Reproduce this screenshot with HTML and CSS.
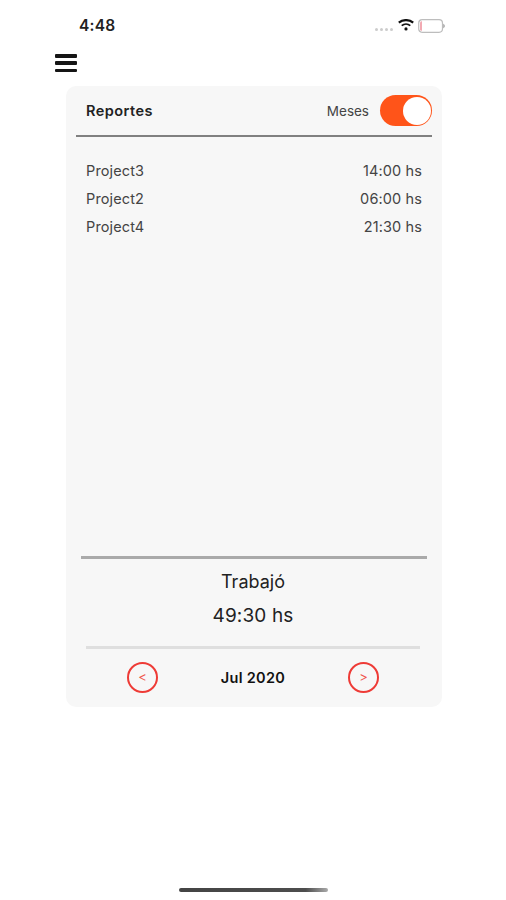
FILE: index.html
```html
<!DOCTYPE html>
<html lang="es">
<head>
<meta charset="utf-8">
<title>Reportes</title>
<link rel="stylesheet" href="styles.css">
</head>
<body>
<header class="status">
  <span class="time">4:48</span>
  <div class="indicators">
    <span class="signal"><i></i><i></i><i></i><i></i></span>
    <svg class="wifi" width="16" height="12" viewBox="0 0 16 12" fill="none" stroke="#111">
      <path d="M.8 3.700C5 .2 11 .2 15.200 3.700" stroke-width="2.200"/>
      <path d="M3.700 6.700c2.500-2.100 6.100-2.100 8.600 0" stroke-width="1.700"/>
      <circle cx="8" cy="9.900" r="1.600" fill="#111" stroke="none"/>
    </svg>
    <svg class="battery" width="27" height="14" viewBox="0 0 27 14">
      <rect x=".7" y=".7" width="23.800" height="12.600" rx="3.500" fill="#fff" stroke="#bdbdbd" stroke-width="1.200"/>
      <path d="M4 2.200v9.600H3.500A1.500 1.500 0 0 1 2 10.300V3.700A1.500 1.500 0 0 1 3.500 2.200z" fill="#f2a9b2"/>
      <path d="M25.300 4.800c1.900.8 1.900 3.600 0 4.400z" fill="#999"/>
    </svg>
  </div>
</header>
<button class="menu" aria-label="Menú"><i></i><i></i><i></i></button>
<main class="card">
  <div class="head">
    <h1>Reportes</h1>
    <span class="mode">Meses</span>
    <span class="toggle"><i></i></span>
  </div>
  <ul class="list">
    <li><span>Project3</span><span class="hours">14:00 hs</span></li>
    <li><span>Project2</span><span class="hours">06:00 hs</span></li>
    <li><span>Project4</span><span class="hours">21:30 hs</span></li>
  </ul>
  <section class="total">
    <div class="label">Trabajó</div>
    <div class="sum">49:30 hs</div>
  </section>
  <nav class="pager">
    <button class="step">&lt;</button>
    <strong>Jul 2020</strong>
    <button class="step">&gt;</button>
  </nav>
</main>
<div class="home"></div>
</body>
</html>
```
FILE: styles.css
```css
* { box-sizing: border-box; }
body {
  margin: 0;
  height: 900px;
  display: flex;
  flex-direction: column;
  background: #fff;
  color: #222;
  font-family: Inter, "Liberation Sans", sans-serif;
  overflow: hidden;
}
button { padding: 0; background: none; border: 0; font-family: inherit; }
.status {
  height: 54px;
  padding: 0 61px 3px 79px;
  display: flex;
  align-items: center;
  justify-content: space-between;
}
.time { font-size: 15.5px; font-weight: 600; letter-spacing: .2px; color: #222; }
.indicators { display: flex; align-items: center; }
.signal { display: flex; gap: 2px; margin: 8px 5px 0 0; }
.signal i { width: 3px; height: 3px; border-radius: 50%; background: #ccc; }
.wifi { margin: -1px 4px 0 0; }
.menu {
  width: 22px;
  height: 18px;
  margin-left: 55px;
  display: flex;
  flex-direction: column;
  justify-content: space-between;
}
.menu i { width: 22px; height: 3.5px; border-radius: 1px; background: #151515; }
.card {
  width: 376px;
  height: 621px;
  margin: 14px 0 0 66px;
  display: flex;
  flex-direction: column;
  background: #f7f7f7;
  border-radius: 10px;
}
.head {
  height: 51px;
  margin: 0 10px;
  padding: 0 0 0 10px;
  display: flex;
  align-items: center;
  border-bottom: 2.5px solid #808080;
}
h1 { margin: 0 auto 0 0; font-size: 14.5px; font-weight: 600; letter-spacing: .45px; }
.mode { font-size: 13.5px; color: #444; }
.toggle {
  width: 52px;
  height: 31px;
  margin-left: 11px;
  padding: 1.5px;
  display: flex;
  justify-content: flex-end;
  border-radius: 16px;
  background: #ff5419;
}
.toggle i { width: 28px; height: 28px; border-radius: 50%; background: #fff; }
.list { flex: 1; margin: 0; padding: 19px 20px 0; list-style: none; }
.list li {
  height: 28px;
  display: flex;
  align-items: center;
  justify-content: space-between;
  font-size: 14.5px;
  letter-spacing: .12px;
  color: #444;
}
.total {
  height: 93px;
  margin: 0 17px 0 15px;
  padding-top: 6px;
  border-top: 3px solid #aaa;
  text-align: center;
  color: #222;
}
.total { margin-right: 15px; padding-right: 2px; }
.label, .sum { height: 34px; line-height: 34px; }
.label { font-size: 18px; }
.sum { font-size: 19px; letter-spacing: .15px; }
.pager {
  height: 61px;
  margin: -3px 22px 0 20px;
  padding: 0 41px 2px;
  display: flex;
  align-items: center;
  justify-content: space-between;
  border-top: 3px solid #dfdfdf;
}
.pager strong { font-size: 14.5px; font-weight: 600; letter-spacing: .3px; color: #111; }
.step {
  width: 31px;
  height: 31px;
  border: 2px solid #ee3b36;
  border-radius: 50%;
  color: #f0564c;
  font-size: 13px;
}
.home {
  width: 149px;
  height: 4px;
  margin: auto 0 8px 179px;
  border-radius: 2px;
  background: linear-gradient(90deg, #444, #4d4d4d 85%, #aaa);
}
```
